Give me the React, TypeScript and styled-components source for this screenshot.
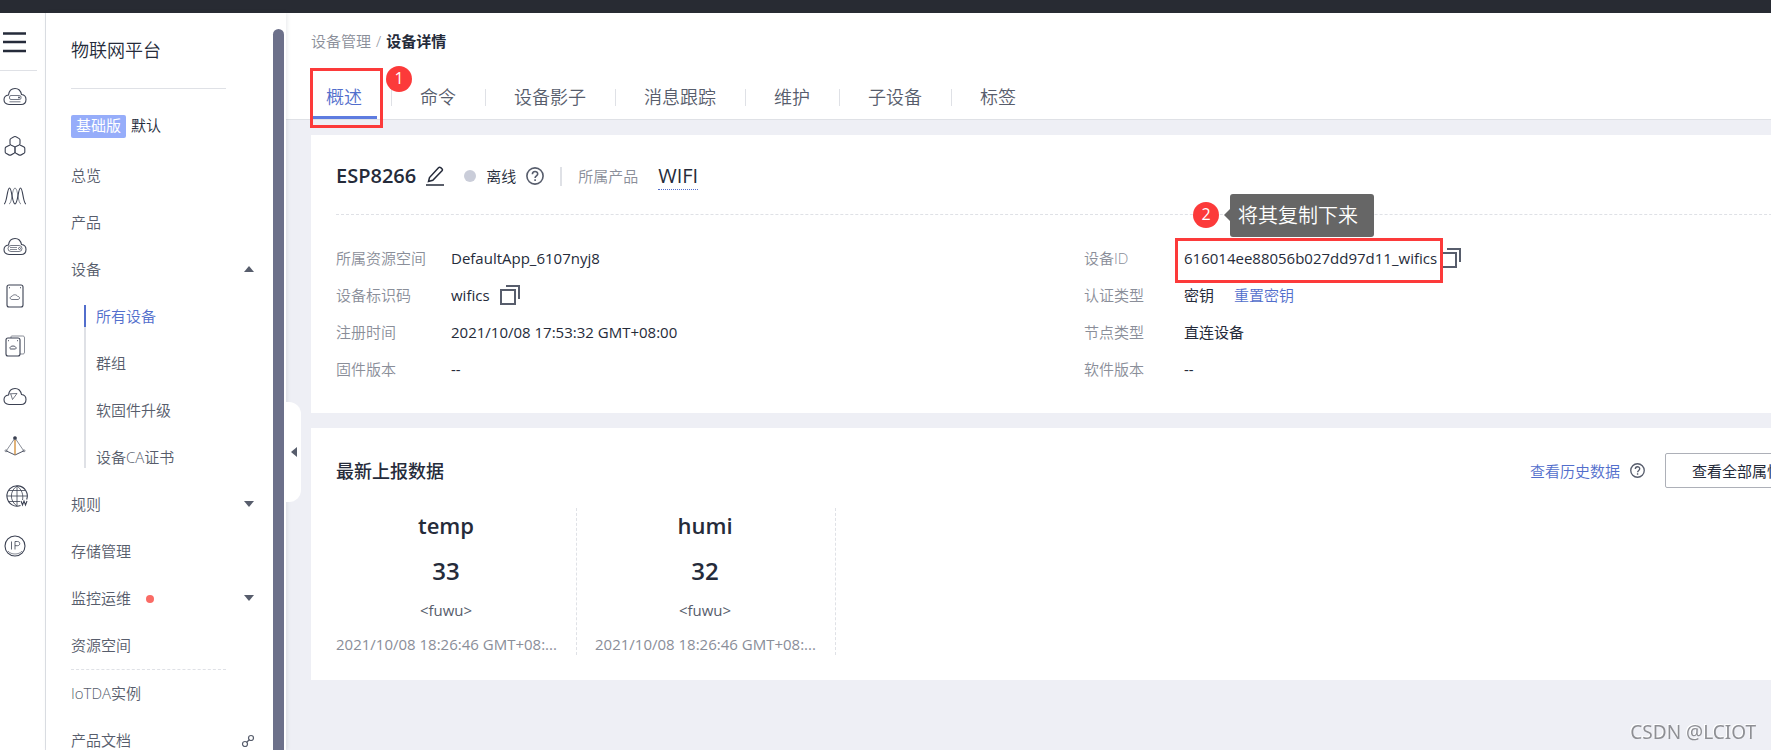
import React from "react";
import styled, { createGlobalStyle } from "styled-components";

const ink = "#252b3a";
const body = "#575d6c";
const muted = "#8a8e99";
const brand = "#526ecc";
const line = "#dfe1e6";
const mark = "#fc3a3a";

const GlobalStyle = createGlobalStyle`
  *, *::before, *::after { box-sizing: border-box; }
  body {
    margin: 0;
    background: #eeeff5;
    color: ${ink};
    font: 400 15px/22px "Open Sans", "Noto Sans CJK SC", sans-serif;
    overflow: hidden;
  }
  h1, h2, h3, p, ul, dl, dd { margin: 0; padding: 0; }
  ul { list-style: none; }
  a { color: inherit; text-decoration: none; }
  button { font: inherit; color: inherit; background: none; border: 0; padding: 0; cursor: pointer; }
  svg { display: block; flex: none; }
`;

const Page = styled.div`
  height: 100vh;
  display: flex;
  flex-direction: column;
  overflow: hidden;
`;
const TopBar = styled.header`
  height: 13px;
  flex: none;
  background: #282b33;
`;
const Shell = styled.div`
  flex: 1;
  min-height: 0;
  display: flex;
`;

const Rail = styled.nav`
  width: 46px;
  flex: none;
  background: #fff;
  border-right: 1px solid ${line};
  overflow: hidden;
`;
const MenuButton = styled.button`
  display: flex;
  align-items: center;
  width: 37px;
  height: 58px;
  padding-left: 3px;
  border-bottom: 1px solid ${line};
`;
const RailList = styled.ul`
  display: flex;
  flex-direction: column;
`;
const RailLink = styled.a`
  display: flex;
  align-items: center;
  height: 50px;
  padding-left: 3px;
  color: #3b4152;
`;

const Sidebar = styled.aside`
  position: relative;
  z-index: 1;
  width: 240px;
  flex: none;
  display: flex;
  background: #fff;
  box-shadow: 1px 0 4px rgba(60, 70, 100, 0.12);
`;
const SideScroll = styled.div`
  flex: 1;
  overflow: hidden;
  padding: 0 19px 0 25px;
`;
const ScrollThumb = styled.div`
  width: 11px;
  margin: 16px 2px 0 0;
  background: #6c708a;
  border-radius: 6px 6px 0 0;
`;
const SideTitle = styled.h2`
  width: 155px;
  height: 76px;
  padding-top: 24px;
  border-bottom: 1px solid ${line};
  font-size: 18px;
  font-weight: 350;
  line-height: 26px;
`;
const Instance = styled.div`
  display: flex;
  align-items: flex-start;
  gap: 5px;
  height: 23px;
  margin: 26px 0 14px;
  font-weight: 350;
  line-height: 21px;
`;
const Edition = styled.span`
  height: 23px;
  padding: 0 5px;
  border-radius: 2px;
  background: #96adfa;
  color: #fff;
  font-weight: 400;
`;
const SideLink = styled.a`
  display: flex;
  align-items: center;
  height: 47px;
  padding-bottom: 2px;
  color: ${body};
  font-weight: 350;
`;
const Trailing = styled.span`
  margin-left: auto;
`;
const RedDot = styled.span`
  width: 8px;
  height: 8px;
  margin: 3px 0 0 15px;
  border-radius: 50%;
  background: #fa6b65;
`;
const SideRule = styled.hr`
  width: 155px;
  margin: 0;
  border: 0;
  border-top: 1px dashed ${line};
`;
const SubMenu = styled.ul`
  display: flex;
  flex-direction: column;
  gap: 25px;
  margin: 12px 0 13px 13px;
  border-left: 2px solid ${line};
`;
const SubLink = styled.a<{ $active?: boolean }>`
  display: block;
  height: 22px;
  margin-left: -2px;
  padding-left: 10px;
  border-left: 2px solid ${(p) => (p.$active ? brand : "transparent")};
  color: ${(p) => (p.$active ? brand : body)};
  font-weight: 350;
`;
const Collapse = styled.button`
  position: absolute;
  left: 100%;
  top: 389px;
  width: 15px;
  height: 100px;
  display: flex;
  align-items: center;
  padding-left: 5px;
  background: #fff;
  border-radius: 0 12px 12px 0;
  color: ${body};
`;

const Main = styled.main`
  flex: 1;
  min-width: 0;
  overflow: hidden;
`;
const PageHead = styled.div`
  height: 107px;
  padding: 17px 25px 0;
  display: flex;
  flex-direction: column;
  justify-content: space-between;
  background: #fff;
  border-bottom: 1px solid ${line};
`;
const Crumbs = styled.nav`
  display: flex;
  gap: 5px;
  color: ${muted};
  font-weight: 350;
  strong { color: ${ink}; font-weight: 600; }
`;
const Tabs = styled.nav`
  display: flex;
  height: 42px;
`;
const TabCell = styled.div`
  display: flex;
  align-items: flex-start;
  & + &::before {
    content: "";
    width: 1px;
    height: 17px;
    margin: 12px 13px 0 14px;
    background: ${line};
  }
`;
const Tab = styled.button<{ $active?: boolean }>`
  height: 42px;
  padding: 0 15px;
  font-size: 18px;
  font-weight: 350;
  color: ${(p) => (p.$active ? brand : body)};
  border-bottom: 3px solid ${(p) => (p.$active ? "#5e7ce0" : "transparent")};
`;
const Content = styled.div`
  min-width: 1596px;
  padding: 15px 25px;
  display: flex;
  flex-direction: column;
  gap: 15px;
`;
const Card = styled.section`
  background: #fff;
  padding: 25px;
`;

const DeviceHead = styled.div`
  display: flex;
  align-items: center;
  height: 55px;
  margin-bottom: 24px;
  padding-bottom: 22px;
  border-bottom: 1px dashed ${line};
`;
const DeviceName = styled.h1`
  font-size: 20px;
  line-height: 30px;
  font-weight: 600;
`;
const IconButton = styled.button<{ $near?: boolean }>`
  margin-left: ${(p) => (p.$near ? 4 : 10)}px;
  color: ${body};
`;
const Status = styled.span`
  display: flex;
  align-items: center;
  gap: 10px;
  margin-left: 20px;
  color: ${ink};
  font-weight: 350;
  &::before {
    content: "";
    width: 12px;
    height: 12px;
    border-radius: 50%;
    background: #cacdd9;
  }
`;
const VRule = styled.span`
  width: 2px;
  height: 19px;
  margin: 0 16px;
  background: ${line};
`;
const Muted = styled.span`
  color: ${muted};
  font-weight: 350;
`;
const ProductLink = styled.a`
  margin-left: 20px;
  border-bottom: 1px dotted ${brand};
  font-size: 20px;
  line-height: 26px;
`;
const Columns = styled.div`
  display: grid;
  grid-template-columns: 1fr 1fr;
  padding-bottom: 1px;
`;
const Facts = styled.dl<{ $label: number }>`
  display: grid;
  grid-template-columns: ${(p) => p.$label}px 1fr;
  grid-auto-rows: 37px;
  align-items: center;
  dt { color: ${muted}; font-weight: 350; }
  dd { display: flex; align-items: center; }
`;
const BlueLink = styled.a`
  color: ${brand};
  font-weight: 350;
`;
const ResetLink = styled(BlueLink)`
  margin-left: 20px;
`;

const ReportHead = styled.div`
  display: flex;
  align-items: center;
  height: 35px;
  padding-right: 23px;
`;
const ReportTitle = styled.h2`
  margin-right: auto;
  font-size: 18px;
  font-weight: 500;
`;
const OutlineButton = styled.button`
  height: 35px;
  margin-left: 20px;
  padding: 0 26px;
  border: 1px solid #adb0b8;
  border-radius: 2px;
  color: ${ink};
`;
const Readings = styled.div`
  display: flex;
  gap: 18px;
  margin-top: 20px;
`;
const Reading = styled.article`
  width: 241px;
  height: 147px;
  padding-right: 20px;
  border-right: 1px dashed ${line};
  text-align: center;
  h3 { font-size: 22px; line-height: 34px; font-weight: 600; }
`;
const Value = styled.p`
  margin: 11px 0 10px;
  font-size: 24px;
  line-height: 36px;
  font-weight: 600;
`;
const Service = styled.p`
  color: ${body};
`;
const Time = styled.p`
  margin-top: 12px;
  color: ${muted};
  white-space: nowrap;
`;

const Marked = styled.span`
  position: relative;
`;
const RedFrame = styled.span`
  position: absolute;
  inset: -9px -6px -14px -9px;
  border: 3px solid ${mark};
  pointer-events: none;
`;
const TabFrame = styled(RedFrame)`
  inset: -9px -6px -9px -1px;
`;
const Step = styled.span`
  position: absolute;
  left: 75px;
  top: -11px;
  width: 26px;
  height: 26px;
  border-radius: 50%;
  background: ${mark};
  color: #fff;
  font-size: 16px;
  line-height: 24px;
  text-align: center;
`;
const Callout = styled.span`
  position: absolute;
  left: 9px;
  bottom: 32px;
  display: flex;
  align-items: center;
  ${Step} { position: static; }
`;
const CalloutText = styled.span`
  position: relative;
  height: 43px;
  margin-left: 11px;
  padding: 0 16px 0 8px;
  border-radius: 3px;
  background: #666;
  color: #fff;
  font-size: 20px;
  font-weight: 350;
  line-height: 43px;
  white-space: nowrap;
  &::before {
    content: "";
    position: absolute;
    right: 100%;
    top: 15px;
    border: 6px solid transparent;
    border-left: 0;
    border-right-color: #666;
  }
`;
const Watermark = styled.div`
  position: fixed;
  right: 15px;
  bottom: 3px;
  color: #8e8f94;
  font-size: 19px;
  font-family: "Noto Sans", sans-serif;
  font-weight: 400;
  line-height: 30px;
  text-shadow: -1px -1px 0 #fff;
`;

const cloud = "M6 20.500c-3 0-5-1.900-5-4.700 0-2.700 2-4.500 4.500-4.800C6 7 8.700 4.500 12 4.500c3.200 0 5.800 2.500 6.500 6 2.800.3 4.500 2.200 4.500 5 0 3-2 5-5 5z";

const railIcons: { name: string; art: React.ReactNode }[] = [
  { name: "云服务器", art: <><path d={cloud} /><rect x="6.500" y="11.500" width="11.500" height="4" rx="1.500" strokeWidth="0.7" /><path d="M6.500 17.800h11" strokeWidth="0.7" /><circle cx="16" cy="13.500" r=".4" /></> },
  { name: "容器", art: <path d="M12 2.500q.5 0 1 .3l3.200 1.800q.8.500.8 1.400v3.500q0 .9-.8 1.400L12.500 12.700h-1L7.800 10.900Q7 10.400 7 9.500V6q0-.9.800-1.400L11 2.800q.5-.3 1-.3zM7 10.900 3 13q-.8.500-.8 1.400v3.500q0 .9.800 1.400l3.200 1.800h1.600L11 19.300q.8-.5.8-1.400v-5M17 10.900l4 2.100q.8.500.8 1.400v3.500q0 .9-.8 1.400l-3.200 1.800h-1.600L13 19.300q-.8-.5-.8-1.400v-5" /> },
  { name: "伸缩", art: <><path d="M1 20C4 20 4 4 6.500 4S9 20 12 20" /><path d="M6 20c3 0 3-16 6-16s3 16 6 16" strokeWidth="0.6" /><path d="M23 20c-3 0-3-16-5.500-16S15 20 12 20" /></> },
  { name: "裸金属", art: <><path d={cloud} /><rect x="5" y="11.500" width="14" height="6" rx="3" strokeWidth="0.7" /><path d="M7 13.500h7M7 15.500h7" strokeWidth="0.6" /><circle cx="16.500" cy="14.500" r="1" strokeWidth="0.7" /></> },
  { name: "云硬盘", art: <><rect x="4" y="1" width="16" height="22" rx="2" /><path d="M8.800 15.500c-2.500-.5-2-3 .2-3.200 1-2 4.500-2 5.500 0 2.500.2 2.800 2.700.5 3.200z" strokeWidth="0.7" /><path d="M6 3.700h1M17 3.700h1" /></> },
  { name: "云备份", art: <><rect x="3" y="4" width="14" height="18" rx="2" /><path d="M8 4V3c0-1 .5-1 1-1h10.500c1.500 0 2 .5 2 2v14c0 1.500-.5 2-2 2H17" strokeWidth="0.6" /><path d="M7.500 15c-1.500-1 0-3 2.500-3s4 2 2.500 3zM5 6.700h1M14 6.700h1" strokeWidth="0.9" /></> },
  { name: "虚拟私有云", art: <><path d={cloud} /><path d="M6.500 9.800 14 9.500 9.500 15.500 7.800 10" strokeWidth="0.7" /></> },
  { name: "负载均衡", art: <><path d="M12 4 3.500 16.500M12 4l8.500 12.500" strokeWidth="0.6" /><path d="M3.500 17 12 21l8.500-4" strokeWidth="0.9" /><circle cx="12" cy="4" r="1.300" fill="currentColor" /><circle cx="3" cy="16.800" r="1" strokeWidth="0.6" /><circle cx="21" cy="16.800" r="1" strokeWidth="0.6" /><path d="M12 6v14.500" stroke="#d18a32" strokeWidth="1.300" /></> },
  { name: "域名", art: <g transform="translate(2 0)"><path d="M15.500 21.600A10.200 10.200 0 1 1 21.700 15.500" /><path d="M2 12h20M4 6.500h16M4 17.500h11M12 2v20M12 2C4.500 7 4.500 17 12 22M12 2c5 3.500 6.500 9 5.500 14" strokeWidth="0.8" /><path d="M16 17l1.500 4 1.500-4 1.500 4 1.500-4" /></g> },
  { name: "弹性公网IP", art: <><circle cx="12" cy="12" r="10" /><path d="M8.500 7.500v8M12 15.500v-8h2.500c3 0 3 4.200 0 4.200H12" strokeWidth="0.8" /><path d="M5 17c3 4 11 4 14 0" strokeWidth="0.6" /></> },
];

const RailIcon = ({ children }: { children: React.ReactNode }) => (
  <svg width="24" height="24" viewBox="0 0 24 24" fill="none" stroke="currentColor" strokeWidth="1.100" overflow="visible">{children}</svg>
);
const Caret = ({ up }: { up?: boolean }) => (
  <svg width="10" height="6" viewBox="0 0 10 6" fill={body}><path d={up ? "M0 6 5 0l5 6z" : "M0 0h10L5 6z"} /></svg>
);
const Help = ({ size }: { size: number }) => (
  <svg width={size} height={size} viewBox="0 0 18 18" fill="none" stroke="currentColor" strokeWidth="1.600">
    <circle cx="9" cy="9" r="8.100" />
    <path d="M6.400 7.300C6.400 3.600 11.700 3.700 11.700 7c0 1.900-2.600 2-2.600 4.100M9.100 12.300v1.700" />
  </svg>
);
const Copy = () => (
  <svg width="20" height="20" viewBox="0 0 20 20" fill="none" stroke={body} strokeWidth="2">
    <path d="M1 5h14v14H1zM6 1h13v13" />
  </svg>
);
const Pencil = () => (
  <svg width="18" height="20" viewBox="0 0 18 20" fill="none" stroke={ink} strokeWidth="1.500">
    <path d="M2.500 15.500 3.500 11.500 12.500 1.700q1-1 2.200 0l1.200 1q1 1 .1 2.100L6.800 14.300zM0 19h18" />
  </svg>
);
const Chain = () => (
  <svg width="12" height="12" viewBox="0 0 12 12" fill="none" stroke={body} strokeWidth="1.200" overflow="visible">
    <circle cx="9" cy="4" r="2.500" />
    <circle cx="3" cy="10" r="2.500" />
    <path d="M4.500 8.500l3-3" />
  </svg>
);

const tabs = ["概述", "命令", "设备影子", "消息跟踪", "维护", "子设备", "标签"];
const subItems = ["所有设备", "群组", "软固件升级", "设备CA证书"];
const readings = [{ name: "temp", value: 33 }, { name: "humi", value: 32 }];

export default function App() {
  return (
    <Page>
      <GlobalStyle />
      <TopBar />
      <Shell>
        <Rail aria-label="服务列表">
          <MenuButton aria-label="菜单">
            <svg width="23" height="22" viewBox="0 0 23 22" stroke={ink} strokeWidth="2.400"><path d="M0 2.500h23M0 11h23M0 20h23" /></svg>
          </MenuButton>
          <RailList>
            {railIcons.map((i) => (
              <li key={i.name}><RailLink href="#" aria-label={i.name}><RailIcon>{i.art}</RailIcon></RailLink></li>
            ))}
          </RailList>
        </Rail>

        <Sidebar>
          <SideScroll>
            <SideTitle>物联网平台</SideTitle>
            <Instance><Edition>基础版</Edition>默认</Instance>
            <nav>
              <SideLink href="#">总览</SideLink>
              <SideLink href="#">产品</SideLink>
              <SideLink href="#">设备<Trailing><Caret up /></Trailing></SideLink>
              <SubMenu>
                {subItems.map((s, i) => (
                  <li key={s}><SubLink href="#" $active={i === 0}>{s}</SubLink></li>
                ))}
              </SubMenu>
              <SideLink href="#">规则<Trailing><Caret /></Trailing></SideLink>
              <SideLink href="#">存储管理</SideLink>
              <SideLink href="#">监控运维<RedDot /><Trailing><Caret /></Trailing></SideLink>
              <SideLink href="#">资源空间</SideLink>
              <SideRule />
              <SideLink href="#">IoTDA实例</SideLink>
              <SideLink href="#">产品文档<Trailing><Chain /></Trailing></SideLink>
            </nav>
          </SideScroll>
          <ScrollThumb />
          <Collapse aria-label="收起">
            <svg width="6" height="10" viewBox="0 0 6 10" fill="currentColor"><path d="M6 0v10L0 5z" /></svg>
          </Collapse>
        </Sidebar>

        <Main>
          <PageHead>
            <Crumbs><a href="#">设备管理</a><span>/</span><strong>设备详情</strong></Crumbs>
            <Tabs>
              {tabs.map((t, i) => (
                <TabCell key={t}>
                  {i === 0 ? (
                    <Marked>
                      <Tab $active>{t}</Tab>
                      <TabFrame />
                      <Step>1</Step>
                    </Marked>
                  ) : <Tab>{t}</Tab>}
                </TabCell>
              ))}
            </Tabs>
          </PageHead>

          <Content>
            <Card>
              <DeviceHead>
                <DeviceName>ESP8266</DeviceName>
                <IconButton aria-label="编辑"><Pencil /></IconButton>
                <Status>离线</Status>
                <IconButton aria-label="帮助"><Help size={18} /></IconButton>
                <VRule />
                <Muted>所属产品</Muted>
                <ProductLink href="#">WIFI</ProductLink>
              </DeviceHead>
              <Columns>
                <Facts $label={115}>
                  <dt>所属资源空间</dt><dd>DefaultApp_6107nyj8</dd>
                  <dt>设备标识码</dt><dd>wifics<IconButton aria-label="复制"><Copy /></IconButton></dd>
                  <dt>注册时间</dt><dd>2021/10/08 17:53:32 GMT+08:00</dd>
                  <dt>固件版本</dt><dd>--</dd>
                </Facts>
                <Facts $label={100}>
                  <dt>设备ID</dt>
                  <dd>
                    <Marked>
                      616014ee88056b027dd97d11_wifics
                      <RedFrame />
                      <Callout><Step>2</Step><CalloutText>将其复制下来</CalloutText></Callout>
                    </Marked>
                    <IconButton $near aria-label="复制"><Copy /></IconButton>
                  </dd>
                  <dt>认证类型</dt><dd>密钥<ResetLink href="#">重置密钥</ResetLink></dd>
                  <dt>节点类型</dt><dd>直连设备</dd>
                  <dt>软件版本</dt><dd>--</dd>
                </Facts>
              </Columns>
            </Card>

            <Card>
              <ReportHead>
                <ReportTitle>最新上报数据</ReportTitle>
                <BlueLink href="#">查看历史数据</BlueLink>
                <IconButton aria-label="帮助"><Help size={15} /></IconButton>
                <OutlineButton>查看全部属性</OutlineButton>
              </ReportHead>
              <Readings>
                {readings.map((r) => (
                  <Reading key={r.name}>
                    <h3>{r.name}</h3>
                    <Value>{r.value}</Value>
                    <Service>&lt;fuwu&gt;</Service>
                    <Time title="2021/10/08 18:26:46 GMT+08:00">2021/10/08 18:26:46 GMT+08:...</Time>
                  </Reading>
                ))}
              </Readings>
            </Card>
          </Content>
        </Main>
      </Shell>
      <Watermark>CSDN @LCIOT</Watermark>
    </Page>
  );
}
